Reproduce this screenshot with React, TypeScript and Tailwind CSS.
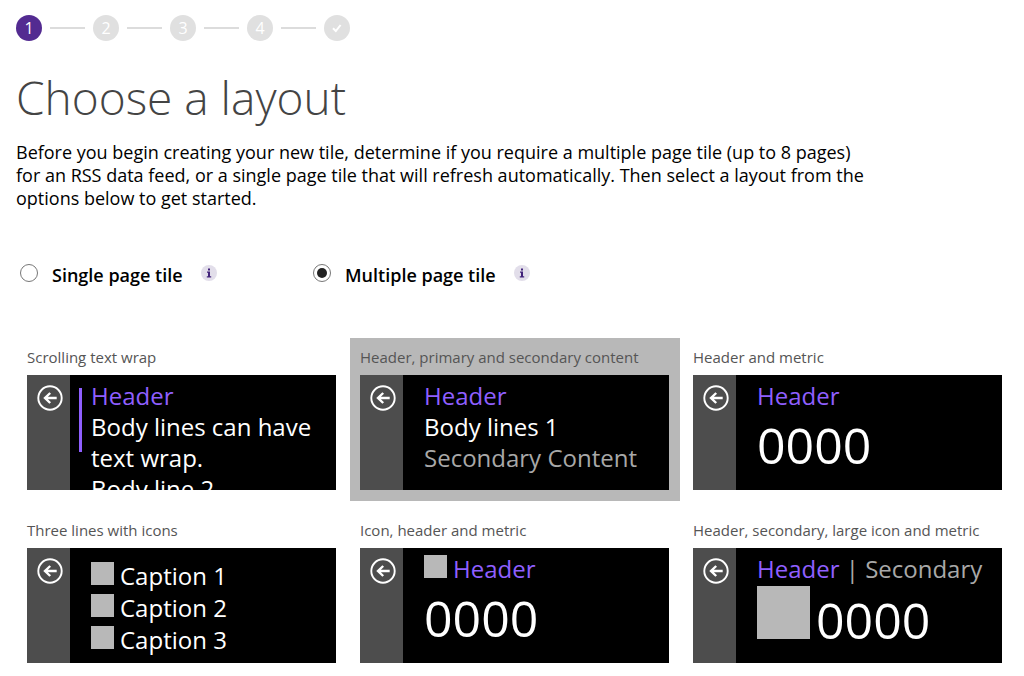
import { useState } from 'react';
import type { ReactNode } from 'react';
import clsx from 'clsx';

const STEPS = ['1', '2', '3', '4', 'done'];

const PAGE_TYPES = [
  { id: 'single', label: 'Single page tile' },
  { id: 'multiple', label: 'Multiple page tile' },
];

const Header = () => <span className="text-[#8f5fff]">Header</span>;

const Metric = () => <span className="text-[50px] leading-[60px]">0000</span>;

const SmallIcon = () => <span className="size-[23px] shrink-0 bg-[#b8b8b8]" />;

const LAYOUTS: { id: string; title: string; preview: ReactNode }[] = [
  {
    id: 'scrolling',
    title: 'Scrolling text wrap',
    preview: (
      <span className="flex gap-[9px] pt-[5px] pl-[9px]">
        <span className="mt-2 h-16 w-[3px] shrink-0 bg-[#8f5fff]" />
        <span className="flex flex-col">
          <Header />
          <span>Body lines can have</span>
          <span>text wrap.</span>
          <span>Body line 2</span>
        </span>
      </span>
    ),
  },
  {
    id: 'primary-secondary',
    title: 'Header, primary and secondary content',
    preview: (
      <span className="flex flex-col pt-[5px] pl-[21px]">
        <Header />
        <span>Body lines 1</span>
        <span className="text-[#a8a8a8]">Secondary Content</span>
      </span>
    ),
  },
  {
    id: 'header-metric',
    title: 'Header and metric',
    preview: (
      <span className="flex flex-col gap-1 pt-[5px] pl-[21px]">
        <Header />
        <Metric />
      </span>
    ),
  },
  {
    id: 'three-lines',
    title: 'Three lines with icons',
    preview: (
      <span className="flex flex-col pt-3 pl-[21px] leading-8">
        {[1, 2, 3].map((n) => (
          <span key={n} className="flex items-baseline gap-1.5">
            <SmallIcon />
            <span>Caption {n}</span>
          </span>
        ))}
      </span>
    ),
  },
  {
    id: 'icon-metric',
    title: 'Icon, header and metric',
    preview: (
      <span className="flex flex-col gap-1 pt-[5px] pl-[21px]">
        <span className="flex items-baseline gap-1.5">
          <SmallIcon />
          <Header />
        </span>
        <Metric />
      </span>
    ),
  },
  {
    id: 'large-icon',
    title: 'Header, secondary, large icon and metric',
    preview: (
      <span className="flex flex-col gap-0.5 pt-[5px] pl-[21px]">
        <span className="text-[#a8a8a8]">
          <Header /> | Secondary
        </span>
        <span className="flex items-baseline gap-1.5">
          <span className="size-[53px] shrink-0 bg-[#b8b8b8]" />
          <Metric />
        </span>
      </span>
    ),
  },
];

const BackIcon = () => (
  <svg viewBox="0 0 26 26" className="size-[26px]" fill="none" stroke="#fff" aria-hidden="true">
    <circle cx="13" cy="13" r="11.7" strokeWidth="1.9" />
    <path d="M19.7 13H8.2M13.2 8 8 13l5.2 5" strokeWidth="2.4" />
  </svg>
);

const Stepper = ({ current }: { current: number }) => (
  <ol className="flex items-center gap-2 text-base">
    {STEPS.map((step, i) => (
      <li key={step} className="flex items-center gap-2">
        {i > 0 && <span className="h-[2px] w-[35px] bg-[#dcdcdc]" />}
        <span
          className={clsx(
            'flex size-[26px] items-center justify-center rounded-full text-white',
            i === current ? 'bg-[#532b91]' : 'bg-[#e0e0e0]'
          )}
        >
          {step === 'done' ? (
            <svg viewBox="0 0 12 12" className="size-3" fill="none" stroke="#fff" strokeWidth="2" aria-label="Done">
              <path d="M2 6.3 4.8 9l4.8-6" />
            </svg>
          ) : (
            step
          )}
        </span>
      </li>
    ))}
  </ol>
);

export default function App() {
  const [pageType, setPageType] = useState('multiple');
  const [layout, setLayout] = useState('primary-secondary');

  return (
    <main className="min-h-screen bg-white pt-[15px] pr-[11px] pb-3 pl-4 font-['Open_Sans',sans-serif] text-black">
      <Stepper current={0} />

      <h1 className="mt-6 text-[46px] leading-[64px] font-light text-[#444]">Choose a layout</h1>

      <p className="mt-3 max-w-[860px] text-[18px] leading-[23px]">
        Before you begin creating your new tile, determine if you require a multiple page tile (up to 8 pages) for an
        RSS data feed, or a single page tile that will refresh automatically. Then select a layout from the options
        below to get started.
      </p>

      {/* Page type */}
      <fieldset aria-label="Page type" className="mt-[49px] flex pl-1">
        {PAGE_TYPES.map((type) => (
          <div key={type.id} className="flex min-w-[293px] items-center">
            <input
              id={type.id}
              type="radio"
              name="page-type"
              checked={pageType === type.id}
              onChange={() => setPageType(type.id)}
              className="size-[18px] appearance-none rounded-full border border-[#777] bg-white bg-clip-content p-[3px] checked:bg-[#222]"
            />
            <label htmlFor={type.id} className="pt-1 pl-[14px] text-[18px] leading-6 font-semibold">
              {type.label}
            </label>
            <button
              type="button"
              aria-label={`About ${type.label}`}
              className="ml-[18px] flex size-4 items-center justify-center rounded-full bg-[#e2deea]"
            >
              <svg viewBox="0 0 16 16" className="size-4" fill="#41227a" aria-hidden="true">
                <path d="M7 3.4h2v2H7zM6 6.6h3v4.6h1.2v1.2H5.8v-1.2H7V7.8H6z" />
              </svg>
            </button>
          </div>
        ))}
      </fieldset>

      {/* Layouts */}
      <div className="mt-[51px] grid grid-cols-3 gap-x-[3px] gap-y-[10px] pl-px">
        {LAYOUTS.map((item) => (
          <button
            key={item.id}
            type="button"
            aria-pressed={layout === item.id}
            onClick={() => setLayout(item.id)}
            className={clsx(
              'flex flex-col gap-2 pt-[9px] pr-[11px] pb-[11px] pl-[10px] text-left',
              layout === item.id && 'bg-[#b8b8b8]'
            )}
          >
            <span className="text-[15px] leading-5 whitespace-nowrap text-[#555]">{item.title}</span>
            <span className="flex h-[115px] w-full overflow-hidden bg-black text-[24px] leading-[31px] whitespace-nowrap text-white">
              <span className="w-[43px] shrink-0 bg-[#4d4d4d] pt-[10px] pl-[10px]">
                <BackIcon />
              </span>
              {item.preview}
            </span>
          </button>
        ))}
      </div>
    </main>
  );
}
